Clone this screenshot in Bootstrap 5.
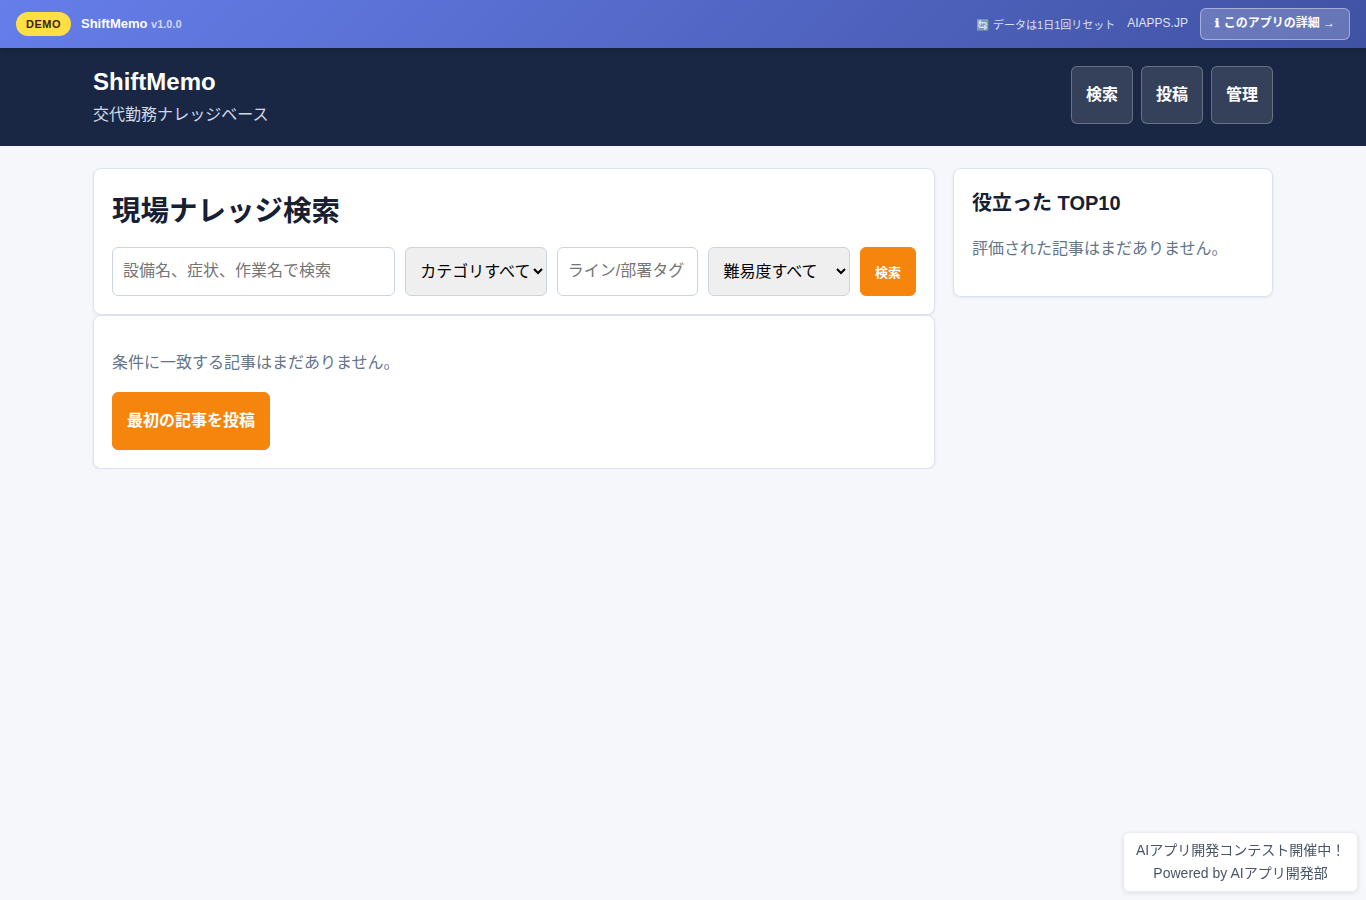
<!DOCTYPE html>
<html lang="ja">
<head>
<meta charset="utf-8">
<meta name="viewport" content="width=device-width, initial-scale=1">
<title>ShiftMemo</title>
<link href="https://cdn.jsdelivr.net/npm/bootstrap@5.3.0/dist/css/bootstrap.min.css" rel="stylesheet">
<style>
body { font-family: "Liberation Sans", "Noto Sans CJK JP", sans-serif; font-size: 16px; line-height: 1.65; color: #172033; background: #f5f7fb; }
.demo-bar { position: relative; z-index: 2; height: 48px; background: linear-gradient(135deg, #667eea 0%, #4052a3 100%); box-shadow: 0 2px 8px rgba(0,0,0,.15); }
.demo-pill { background: #ffdf43; color: #422006; font-size: 11px; font-weight: 700; letter-spacing: .5px; line-height: 16px; padding: 4px 10px; }
.demo-name { font-size: 13px; line-height: 20px; margin-left: 2px; }
.demo-version { font-size: 11px; opacity: .7; }
.demo-links { gap: 12px; }
.demo-note { font-size: 11px; opacity: .8; line-height: 18px; padding-top: 1px; }
.demo-link { font-size: 12px; line-height: 20px; color: rgba(255,255,255,.85); margin-bottom: 2px; }
.demo-btn { font-size: 12px; font-weight: 700; line-height: 20px; height: 32px; padding: 4px 14px; background: rgba(255,255,255,.2); border: 1px solid rgba(255,255,255,.4); border-radius: 6px; color: #fff; }
.info-mark { font-family: "DejaVu Sans", sans-serif; -webkit-text-stroke: .4px #fff; letter-spacing: .8px; }
.shell { width: 1180px; }
.site-head { background: #1a2744; height: 98px; padding-bottom: 4px; }
.brand { font-size: 24px; line-height: 40px; font-weight: 700; }
.tagline { color: #cfd8e8; line-height: 26px; letter-spacing: .03px; }
.act { font-weight: 700; font-size: 16px; line-height: 26px; padding: 15px 14px; border-radius: 6px; color: #fff; border: 1px solid rgba(255,255,255,.25); background: rgba(255,255,255,.12); }
.act-main { background: #f5850c; border-color: #f5850c; }
.content-grid { display: grid; grid-template-columns: minmax(0,1fr) 320px; gap: 18px; padding-top: 22px; }
.panel { border: 1px solid #dde3ee; border-radius: 8px; padding: 18px; box-shadow: 0 1px 3px rgba(20,32,60,.08); }
.panel h1 { font-size: 28.5px; line-height: 46px; font-weight: 700; margin: 0; padding: 1px 0 13px; }
.panel h2 { font-size: 20px; line-height: 33px; font-weight: 700; margin: 0 0 16px; }
.search-form { display: grid; grid-template-columns: 2fr 1fr 1fr 1fr auto; gap: 10px; }
.field { width: 100%; min-width: 0; height: 49px; padding: 10px; border: 1px solid #cbd5e1; border-radius: 6px; font-size: 16px; line-height: normal; }
input.field { background: #fff; padding-bottom: 11px; }
input.field::placeholder { color: #757575; }
select.field { background: #efefef; color: #000; padding-right: 0; }
.search-btn { font-size: 13px; padding: 0 14px 1px; line-height: normal; }
.muted-text { color: #64748b; line-height: 26px; margin: 16px 0; }
.contest { right: 8px; bottom: 8px; width: 235px; height: 60px; padding: 6px 12px; font-size: 14px; line-height: 23px; color: #4a5568; border: 1px solid #e9edf3; border-radius: 6px; box-shadow: 0 1px 4px rgba(0,0,0,.1); }
</style>
</head>
<body>
<div class="demo-bar d-flex align-items-center justify-content-between px-3 text-white">
  <div class="d-flex align-items-center">
    <span class="demo-pill rounded-pill me-2">DEMO</span>
    <strong class="demo-name">ShiftMemo <span class="demo-version">v1.0.0</span></strong>
  </div>
  <div class="demo-links d-flex align-items-center">
    <span class="demo-note">🔄 データは1日1回リセット</span>
    <a class="demo-link text-decoration-none" href="#">AIAPPS.JP</a>
    <a class="demo-btn text-decoration-none" href="#"><span class="info-mark">ℹ</span> このアプリの詳細 →</a>
  </div>
</div>
<header class="site-head text-white">
  <div class="shell mx-auto h-100 d-flex align-items-center justify-content-between">
    <div>
      <div class="brand">ShiftMemo</div>
      <div class="tagline">交代勤務ナレッジベース</div>
    </div>
    <nav class="d-flex gap-2">
      <a class="act text-decoration-none" href="#">検索</a>
      <a class="act text-decoration-none" href="#">投稿</a>
      <a class="act text-decoration-none" href="#">管理</a>
    </nav>
  </div>
</header>
<main class="shell mx-auto content-grid align-items-start">
  <div>
    <section class="panel bg-white">
      <h1>現場ナレッジ検索</h1>
      <form class="search-form">
        <input class="field" type="text" placeholder="設備名、症状、作業名で検索">
        <select class="field"><option>カテゴリすべて</option></select>
        <input class="field" type="text" placeholder="ライン/部署タグ">
        <select class="field"><option>難易度すべて</option></select>
        <button class="act act-main search-btn" type="button">検索</button>
      </form>
    </section>
    <section class="panel bg-white">
      <p class="muted-text">条件に一致する記事はまだありません。</p>
      <a class="act act-main d-inline-block align-top text-decoration-none" href="#">最初の記事を投稿</a>
    </section>
  </div>
  <aside class="panel bg-white">
    <h2>役立った TOP10</h2>
    <p class="muted-text">評価された記事はまだありません。</p>
  </aside>
</main>
<div class="contest position-fixed bg-white text-center text-nowrap">AIアプリ開発コンテスト開催中！<br>Powered by AIアプリ開発部</div>
<script src="https://cdn.jsdelivr.net/npm/bootstrap@5.3.0/dist/js/bootstrap.bundle.min.js"></script>
</body>
</html>
